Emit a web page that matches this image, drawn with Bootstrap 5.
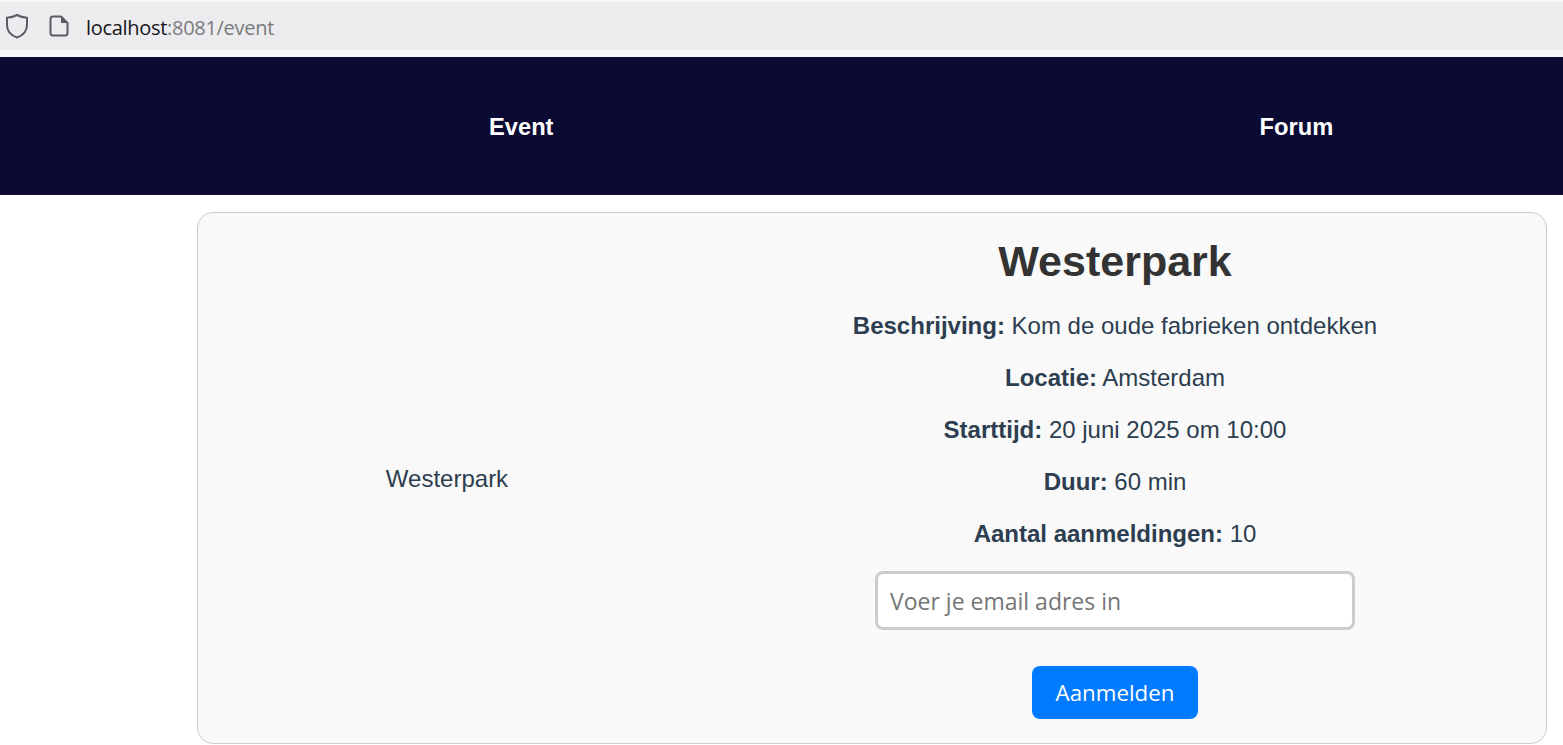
<!DOCTYPE html>
<html lang="en">

<head>
    <meta charset="UTF-8">
    <meta name="viewport" content="width=device-width, initial-scale=1.0">
    <title>Event</title>
    <link href="https://cdn.jsdelivr.net/npm/bootstrap@5.3.2/dist/css/bootstrap.min.css" rel="stylesheet">
    <style>
        html, body { height: 100%; overflow: hidden; }
        body { font-family: "Liberation Sans", Arial, sans-serif; background: #fff; color: #2c3e50; }
        .browser-strip { height: 57px; padding-top: 2px; background: #f7f7f9; }
        .browser-bar { height: 48px; background: #ececee; padding-left: 5px; }
        .browser-bar svg { display: block; }
        .doc-icon { margin-left: 20px; }
        .url-text { font-family: "Open Sans", sans-serif; font-size: 20px; letter-spacing: -0.3px; color: #7a7a7e; margin-left: 17px; padding-top: 3px; }
        .url-text span { color: #15141a; }
        .top-menu { height: 138px; background: #0a0a33; padding: 4px 0 0 489px; gap: 706px; }
        .top-menu a { color: #fff; font-size: 23.7px; font-weight: 700; text-decoration: none; }
        .event-card { margin: 17px 16px 0 197px; height: 532px; background: #f9f9f9; border: 1px solid #ccc; border-radius: 16px; }
        .event-left { width: 486px; padding: 2px 0 0 12px; font-size: 24px; }
        .event-right { width: 862px; padding-top: 21px; }
        .event-right h2 { font-size: 43px; font-weight: 700; color: #333; line-height: 54px; margin-bottom: 24px; }
        .event-right p { font-size: 24px; line-height: 28px; margin-bottom: 24px; }
        .email-field { width: 480px; height: 59px; margin: -1px auto 36px; padding: 0 12px; border: 3px solid #ccc; border-radius: 8px; font-family: "Open Sans", sans-serif; font-size: 23px; }
        .email-field::placeholder { color: #757575; opacity: 1; }
        .signup-btn { width: 166px; height: 53px; padding: 0; background: #007bff; border: 0; border-radius: 8px; color: #fff; font-family: "Open Sans", sans-serif; font-size: 22.3px; }
    </style>
</head>

<body>
    <div class="browser-strip">
        <div class="browser-bar d-flex align-items-center">
            <svg width="24" height="26" viewBox="0 0 24 26" fill="none" stroke="#5b5b66" stroke-width="2">
                <path d="M12 2 C15 3.6 18.500 4.500 22 4.800 V12 C22 18 17.500 22.500 12 24.500 C6.500 22.500 2 18 2 12 V4.800 C5.500 4.500 9 3.600 12 2 Z" />
            </svg>
            <svg class="doc-icon" width="20" height="22" viewBox="0 0 20 22" fill="none" stroke="#5b5b66" stroke-width="2">
                <path d="M4 1.500 H12 L18.500 8 V18 Q18.500 20.500 16 20.500 H4 Q1.500 20.500 1.500 18 V4 Q1.500 1.500 4 1.500 Z" stroke-linejoin="round" />
                <path d="M12 1.500 V8 H18.500 Z" fill="#5b5b66" stroke="none" />
            </svg>
            <div class="url-text"><span>localhost</span>:8081/event</div>
        </div>
    </div>

    <nav class="top-menu d-flex align-items-center">
        <a href="#">Event</a>
        <a href="#">Forum</a>
    </nav>

    <div class="event-card d-flex">
        <div class="event-left d-flex align-items-center justify-content-center">Westerpark</div>
        <div class="event-right text-center">
            <h2>Westerpark</h2>
            <p><strong>Beschrijving:</strong> Kom de oude fabrieken ontdekken</p>
            <p><strong>Locatie:</strong> Amsterdam</p>
            <p><strong>Starttijd:</strong> 20 juni 2025 om 10:00</p>
            <p><strong>Duur:</strong> 60 min</p>
            <p><strong>Aantal aanmeldingen:</strong> 10</p>
            <input type="email" class="email-field d-block" placeholder="Voer je email adres in">
            <button class="signup-btn">Aanmelden</button>
        </div>
    </div>

    <script src="https://cdn.jsdelivr.net/npm/bootstrap@5.3.2/dist/js/bootstrap.bundle.min.js"></script>
</body>

</html>
